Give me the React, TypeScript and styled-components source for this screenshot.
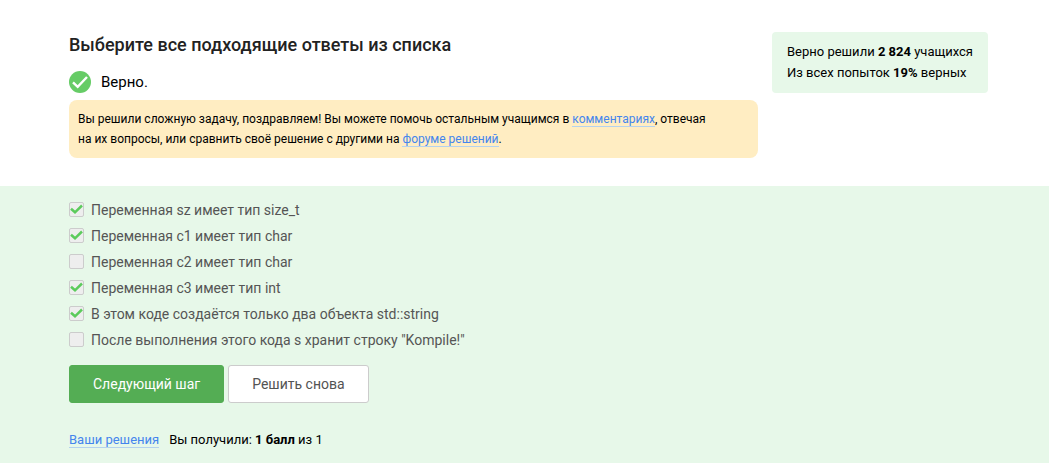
import React from "react";
import styled, { createGlobalStyle } from "styled-components";

const GlobalStyle = createGlobalStyle`
  *, *::before, *::after { box-sizing: border-box; }
  body {
    margin: 0;
    background: #fff;
    color: #000;
    font-family: Roboto, "Open Sans", sans-serif;
    font-size: 13px;
    line-height: 20px;
  }
`;

const Header = styled.header`
  display: flex;
  align-items: flex-start;
  gap: 14px;
  padding: 32px 61px 28px 69px;
`;

const Main = styled.div`
  flex: 1;
  min-width: 0;
`;

const Title = styled.h1`
  margin: 0 0 12px;
  font-size: 18px;
  font-weight: 500;
  line-height: 26px;
  color: #222;
`;

const Status = styled.div`
  display: flex;
  align-items: center;
  gap: 10px;
  height: 24px;
  margin-bottom: 6px;
  font-size: 15px;
`;

const Notice = styled.p`
  margin: 0;
  padding: 9px 44px 9px 9px;
  border-radius: 8px;
  background: #ffedc2;
  font-size: 12px;
`;

const Link = styled.a`
  color: #4485ed;
  text-decoration: none;
  border-bottom: 1px solid #b4d2ee;
`;

const Stats = styled.aside`
  flex: none;
  padding: 9px 15px 10px;
  border-radius: 4px;
  background: #e7f8e9;
  line-height: 21px;
`;

const Answers = styled.form`
  padding: 11px 61px 13px 69px;
  background: #e7f8e9;
`;

const Options = styled.fieldset`
  margin: 0 0 12px;
  padding: 0;
  border: 0;
`;

const Option = styled.label`
  display: flex;
  align-items: center;
  gap: 7px;
  height: 26px;
  font-size: 14px;
  color: #555;
`;

const Box = styled.span`
  display: grid;
  width: 15px;
  height: 15px;
  margin-bottom: 2px;

  > * { grid-area: 1 / 1; }
`;

const Check = styled.input`
  appearance: none;
  width: 15px;
  height: 15px;
  margin: 0;
  border: 1px solid #ccc;
  border-radius: 2px;
  background: #eee;

  & + svg { pointer-events: none; visibility: hidden; z-index: 1; }
  &:checked + svg { visibility: visible; }
`;

const Actions = styled.div`
  display: flex;
  gap: 4px;
  margin-bottom: 27px;
`;

const Button = styled.button<{ $primary?: boolean }>`
  height: 38px;
  padding: 0 23px;
  border: 1px solid ${(p) => (p.$primary ? "#54ad54" : "#ccc")};
  border-radius: 3px;
  background: ${(p) => (p.$primary ? "#54ad54" : "#fff")};
  color: ${(p) => (p.$primary ? "#fff" : "#535353")};
  font: inherit;
  font-size: 14px;
`;

const Footer = styled.div`
  display: flex;
  gap: 10px;
`;

const options = [
  { text: "Переменная sz имеет тип size_t", checked: true },
  { text: "Переменная c1 имеет тип char", checked: true },
  { text: "Переменная c2 имеет тип char", checked: false },
  { text: "Переменная c3 имеет тип int", checked: true },
  { text: "В этом коде создаётся только два объекта std::string", checked: true },
  { text: "После выполнения этого кода s хранит строку \"Kompile!\"", checked: false },
];

export default function App() {
  return (
    <>
      <GlobalStyle />
      <Header>
        <Main>
          <Title>Выберите все подходящие ответы из списка</Title>
          <Status>
            <svg width="22" height="22" viewBox="0 0 22 22" aria-hidden="true">
              <circle cx="11" cy="11" r="11" fill="#66cc66" />
              <path d="M4 11.3 L8.7 15.8 L18 6" fill="none" stroke="#fff" strokeWidth="2.4" />
            </svg>
            Верно.
          </Status>
          <Notice>
            Вы решили сложную задачу, поздравляем! Вы можете помочь остальным учащимся в{" "}
            <Link href="#comments">комментариях</Link>, отвечая на их вопросы, или сравнить своё
            решение с другими на <Link href="#solutions">форуме решений</Link>.
          </Notice>
        </Main>
        <Stats>
          Верно решили <b>2 824</b> учащихся
          <br />
          Из всех попыток <b>19%</b> верных
        </Stats>
      </Header>
      <Answers>
        <Options>
          {options.map((o) => (
            <Option key={o.text}>
              <Box>
                <Check type="checkbox" defaultChecked={o.checked} />
                <svg width="15" height="15" viewBox="0 0 15 15" aria-hidden="true">
                  <path d="M2 6.7 L6 10.3 L13 3.5" fill="none" stroke="#5ccb5c" strokeWidth="2.5" />
                </svg>
              </Box>
              {o.text}
            </Option>
          ))}
        </Options>
        <Actions>
          <Button type="button" $primary>Следующий шаг</Button>
          <Button type="button">Решить снова</Button>
        </Actions>
        <Footer>
          <span>
            <Link href="#submissions">Ваши решения</Link>
          </span>
          <span>
            Вы получили: <b>1 балл</b> из 1
          </span>
        </Footer>
      </Answers>
    </>
  );
}
